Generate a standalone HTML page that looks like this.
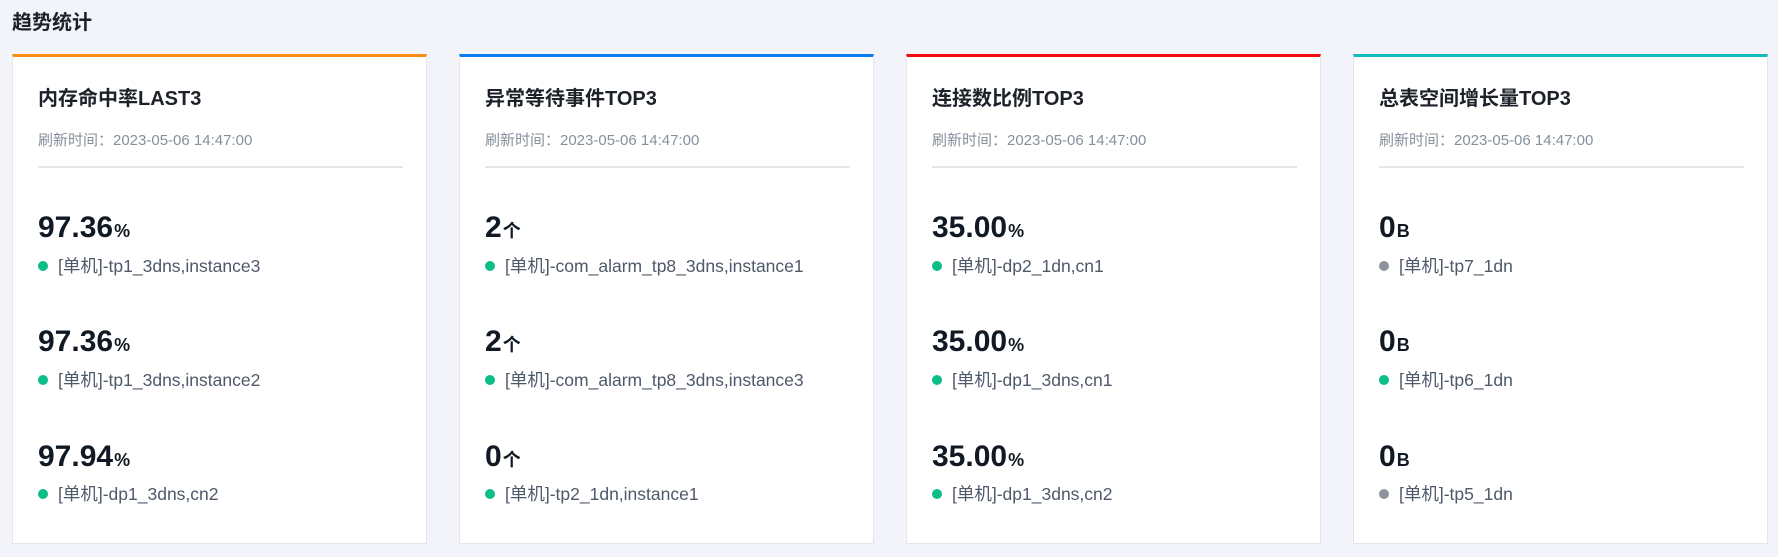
<!DOCTYPE html>
<html><head><meta charset="utf-8"><style>
*{margin:0;padding:0;box-sizing:border-box}
body{width:1778px;height:557px;background:#f3f4f9;font-family:"Liberation Sans","Noto Sans CJK SC",sans-serif;position:relative;overflow:hidden;color:#1d2129}
.h{position:absolute;left:12px;top:10px;font-size:20px;font-weight:bold;line-height:26px;color:#1d2129}
.card{position:absolute;top:54px;width:415px;height:490px;background:#fff;border:1px solid #e4e6ee;border-top:3px solid}
.t{position:absolute;left:25px;top:28px;font-size:20px;font-weight:bold;line-height:28px}
.r{position:absolute;left:25px;top:74px;font-size:15px;color:#86909c;line-height:20px}
.d{position:absolute;left:25px;top:109px;width:365px;height:2px;background:#e5e6eb}
.v{position:absolute;left:25px;font-size:30px;font-weight:bold;line-height:36px;color:#111a24}
.v small{font-size:18px;margin-left:1px}
.l{position:absolute;left:45px;font-size:17.5px;color:#4e5969;line-height:22px}
.l:before{content:"";position:absolute;left:-20px;top:6px;width:10px;height:10px;border-radius:50%;background:var(--c,#0bbd87)}
</style></head><body>
<div class="h">趋势统计</div>

<div class="card" style="left:12px;border-top-color:#fa8c16">
<div class="t">内存命中率LAST3</div>
<div class="r">刷新时间：2023-05-06 14:47:00</div>
<div class="d"></div>
<div class="v" style="top:153px">97.36<small>%</small></div>
<div class="l" style="top:198px">[单机]-tp1_3dns,instance3</div>
<div class="v" style="top:267px">97.36<small>%</small></div>
<div class="l" style="top:312px">[单机]-tp1_3dns,instance2</div>
<div class="v" style="top:382px">97.94<small>%</small></div>
<div class="l" style="top:426px">[单机]-dp1_3dns,cn2</div>
</div>

<div class="card" style="left:459px;border-top-color:#0a7df5">
<div class="t">异常等待事件TOP3</div>
<div class="r">刷新时间：2023-05-06 14:47:00</div>
<div class="d"></div>
<div class="v" style="top:153px">2<small>个</small></div>
<div class="l" style="top:198px">[单机]-com_alarm_tp8_3dns,instance1</div>
<div class="v" style="top:267px">2<small>个</small></div>
<div class="l" style="top:312px">[单机]-com_alarm_tp8_3dns,instance3</div>
<div class="v" style="top:382px">0<small>个</small></div>
<div class="l" style="top:426px">[单机]-tp2_1dn,instance1</div>
</div>

<div class="card" style="left:906px;border-top-color:#f50a0a">
<div class="t">连接数比例TOP3</div>
<div class="r">刷新时间：2023-05-06 14:47:00</div>
<div class="d"></div>
<div class="v" style="top:153px">35.00<small>%</small></div>
<div class="l" style="top:198px">[单机]-dp2_1dn,cn1</div>
<div class="v" style="top:267px">35.00<small>%</small></div>
<div class="l" style="top:312px">[单机]-dp1_3dns,cn1</div>
<div class="v" style="top:382px">35.00<small>%</small></div>
<div class="l" style="top:426px">[单机]-dp1_3dns,cn2</div>
</div>

<div class="card" style="left:1353px;border-top-color:#12bbb9">
<div class="t">总表空间增长量TOP3</div>
<div class="r">刷新时间：2023-05-06 14:47:00</div>
<div class="d"></div>
<div class="v" style="top:153px">0<small>B</small></div>
<div class="l" style="top:198px;--c:#8f959e">[单机]-tp7_1dn</div>
<div class="v" style="top:267px">0<small>B</small></div>
<div class="l" style="top:312px">[单机]-tp6_1dn</div>
<div class="v" style="top:382px">0<small>B</small></div>
<div class="l" style="top:426px;--c:#8f959e">[单机]-tp5_1dn</div>
</div>
</body></html>
